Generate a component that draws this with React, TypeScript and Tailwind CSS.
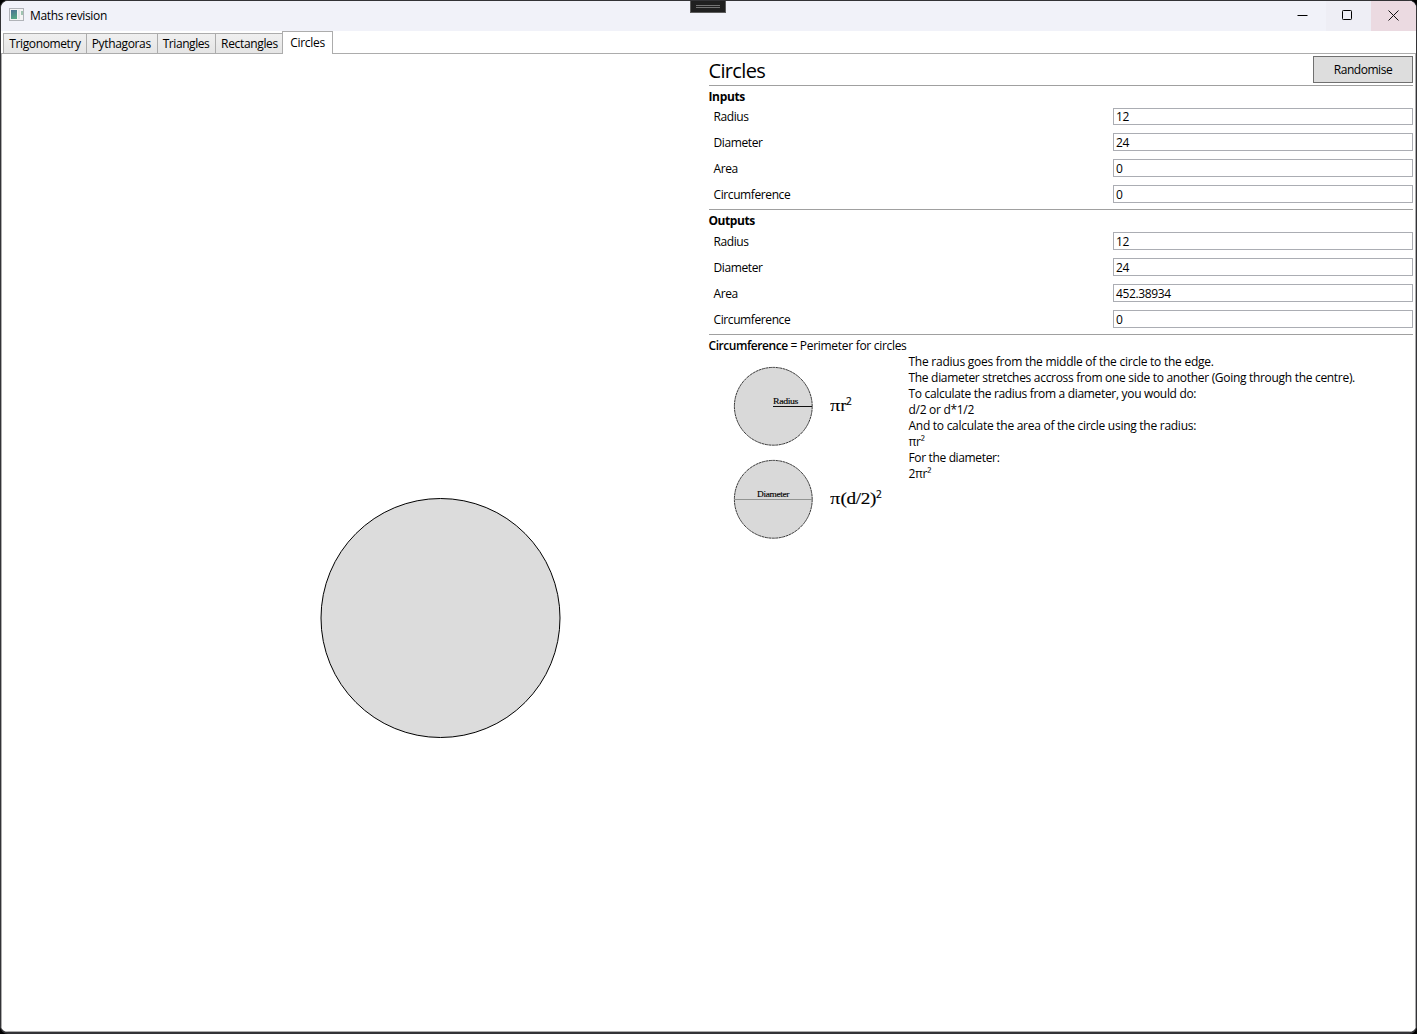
import React from "react";

const tabs = [
  { name: "Trigonometry", width: "w-[84px]", spacing: "tracking-[-0.38px]" },
  { name: "Pythagoras", width: "w-[72px]", spacing: "tracking-[-0.34px] pr-[1.5px]" },
  { name: "Triangles", width: "w-[59px]", spacing: "tracking-[-0.44px] pr-px" },
  { name: "Rectangles", width: "w-[68px]", spacing: "tracking-[-0.34px] pl-px" },
];

const inputs = [
  ["Radius", "12"],
  ["Diameter", "24"],
  ["Area", "0"],
  ["Circumference", "0"],
];

const outputs = [
  ["Radius", "12"],
  ["Diameter", "24"],
  ["Area", "452.38934"],
  ["Circumference", "0"],
];

function TitleBar() {
  return (
    <header className="relative flex h-[30px] shrink-0 bg-[#f1f2f9]">
      <svg className="ml-2 mt-[7px] h-[13px] w-[15px]" viewBox="0 0 15 13" shapeRendering="crispEdges">
        <defs>
          <linearGradient id="pane" x1="0" y1="0" x2="0.3" y2="1">
            <stop offset="0" stopColor="#4a6f94" />
            <stop offset="1" stopColor="#55a585" />
          </linearGradient>
        </defs>
        <rect x="0.5" y="0.5" width="14" height="12" fill="#f4f4f4" stroke="#b0b3b8" />
        <rect x="2" y="2" width="6" height="9" fill="url(#pane)" />
        <rect x="9" y="2" width="2" height="9" fill="#e2e5e8" />
        <rect x="12" y="3" width="2" height="4" fill="#9fc4b0" />
      </svg>
      <h1 className="ml-[6px] mt-[7px] text-[12px] leading-[16px] tracking-[-0.36px]">Maths revision</h1>
      <div className="absolute left-[689px] top-[-1px] flex h-[13px] w-9 flex-col items-center gap-px border border-[#5c5c5c] bg-[#202020] pt-1">
        <i className="h-px w-6 bg-[#737373]" />
        <i className="h-px w-6 bg-[#737373]" />
      </div>
      <div className="ml-auto flex">
        <button className="flex w-[46px] items-center justify-center pr-[2px]">
          <svg className="h-[11px] w-[11px]" viewBox="0 0 11 11"><path d="M0.5 4.5h10" stroke="#000" /></svg>
        </button>
        <button className="flex w-[45px] items-center justify-center bg-[#eeeef5]">
          <svg className="mb-px mr-[3px] h-[11px] w-[11px]" viewBox="0 0 11 11"><rect x="0.5" y="0.5" width="9" height="9" rx="0.8" fill="none" stroke="#000" /></svg>
        </button>
        <button className="flex w-[45px] items-center justify-center bg-[#ebdae1]">
          <svg className="mb-[2px] mr-[1px] h-[11px] w-[11px]" viewBox="0 0 11 11"><path d="M0.5 0.5l10 10M10.5 0.5l-10 10" stroke="#111" /></svg>
        </button>
      </div>
    </header>
  );
}

function Tabs() {
  return (
    <nav className="relative z-10 flex h-[23px] shrink-0 items-end pl-[2px] text-[12px] leading-[16px]">
      {tabs.map((t) => (
        <button key={t.name} className={`${t.width} ${t.spacing} -mr-px mb-px h-[20px] shrink-0 whitespace-nowrap border border-b-0 border-[#acacac] bg-linear-to-b from-[#f0f0f0] to-[#e5e5e5] pt-px`}>
          {t.name}
        </button>
      ))}
      <button className="h-[23px] w-[51px] border border-b-0 border-[#acacac] bg-white tracking-[-0.3px]">Circles</button>
    </nav>
  );
}

function Fields({ rows, first }: { rows: string[][]; first: string }) {
  return (
    <div className="flex flex-col gap-2">
      {rows.map(([label, value], i) => (
        <label key={label} className="flex h-[18px] justify-between pl-[4.5px]">
          <span className="leading-[20px] tracking-[-0.4px]">{label}</span>
          <span className={`w-[300px] border border-[#abadb3] pl-[2px] tracking-[-0.38px] ${i === 0 ? first : "leading-[17px]"}`}>{value}</span>
        </label>
      ))}
    </div>
  );
}

function Rule() {
  return <hr className="h-px border-0 bg-[#a0a0a0]" />;
}

function Diagram({ kind }: { kind: "Radius" | "Diameter" }) {
  const radius = kind === "Radius";
  return (
    <svg className="h-20 w-20 shrink-0" viewBox="0 0 80 80">
      <circle cx="40.3" cy="40.3" r="38.9" fill="#d9d9d9" stroke="#222" strokeWidth="0.9" strokeDasharray="3 0.5" />
      {radius ? (
        <path d="M40 40.5h39" stroke="#111" />
      ) : (
        <path d="M1 40.5h78" stroke="#929492" />
      )}
      <text
        x="40"
        y="38"
        textAnchor={radius ? "start" : "middle"}
        textLength={radius ? 25 : 32}
        lengthAdjust="spacingAndGlyphs"
        fontFamily="Liberation Serif, serif"
        fontSize="7.5"
        stroke="#000"
        strokeWidth="0.12"
      >
        {kind}
      </text>
    </svg>
  );
}

function Formula({ rest, width }: { rest: string; width: number }) {
  return (
    <svg className="ml-[17px] h-20 w-14 shrink-0" viewBox="0 0 56 80" fontFamily="Liberation Serif, serif" fontSize="16">
      <text x="0" y="45" textLength="10" lengthAdjust="spacingAndGlyphs">π</text>
      <text x="10.5" y="45" textLength={width} lengthAdjust="spacingAndGlyphs" stroke="#000" strokeWidth="0.15">{rest}</text>
      <text x={width + 10.5} y="39" fontFamily="Open Sans, sans-serif" fontSize="10" stroke="#000" strokeWidth="0.2">2</text>
    </svg>
  );
}

export default function App() {
  return (
    <div className="h-[1034px] w-[1417px] bg-black">
      <main
        className="flex h-full flex-col overflow-hidden rounded-lg border border-[#333336] border-b-2 bg-white text-[12px] text-black"
        style={{ fontFamily: '"Open Sans", "Noto Sans", sans-serif' }}
      >
        <TitleBar />
        <Tabs />
        <div className="-mt-px flex min-h-0 flex-1 border border-[#acacac]">
          <section className="w-[707px] shrink-0 pl-[318px] pt-[444px]">
            <svg className="h-[241px] w-[241px]" viewBox="0 0 241 241">
              <circle cx="120.5" cy="120" r="119.5" fill="#dcdcdc" stroke="#000" />
            </svg>
          </section>
          <section className="w-[704px] shrink-0 tracking-[-0.29px]">
            <div className="flex h-[31px] justify-between pt-[2px]">
              <h2 className="-ml-[0.5px] text-[20px] leading-[30px] tracking-[-0.65px]">Circles</h2>
              <button className="h-[27px] w-[100px] border border-[#707070] bg-[#dddddd] pt-px tracking-[-0.45px]">Randomise</button>
            </div>
            <Rule />
            <h3 className="-ml-[0.5px] h-[22px] font-bold leading-[22px] tracking-[-0.35px]">Inputs</h3>
            <div className="-mt-px">
              <Fields rows={inputs} first="mt-px leading-[15px]" />
            </div>
            <div className="h-[6px]" />
            <Rule />
            <h3 className="-ml-[0.5px] h-[22px] font-bold leading-[22px] tracking-[-0.45px]">Outputs</h3>
            <Fields rows={outputs} first="leading-[17px]" />
            <div className="h-[6px]" />
            <Rule />
            <p className="-ml-[0.5px] h-[19px] leading-[22px] tracking-[-0.3px]">
              <b className="font-semibold tracking-[-0.45px]">Circumference</b> = Perimeter for circles
            </p>
            <div className="flex">
              <div className="flex w-[199px] shrink-0 flex-col gap-[13px] pl-[24px] pt-[12px]">
                <div className="flex">
                  <Diagram kind="Radius" />
                  <Formula rest="r" width={5.5} />
                </div>
                <div className="flex">
                  <Diagram kind="Diameter" />
                  <Formula rest="(d/2)" width={35.5} />
                </div>
              </div>
              <div className="whitespace-nowrap pl-[0.5px] leading-[16px]">
                <p className="tracking-[-0.25px]">The radius goes from the middle of the circle to the edge.</p>
                <p className="tracking-[-0.305px]">The diameter stretches accross from one side to another (Going through the centre).</p>
                <p className="tracking-[-0.32px]">To calculate the radius from a diameter, you would do:</p>
                <p>d/2 or d*1/2</p>
                <p className="tracking-[-0.27px]">And to calculate the area of the circle using the radius:</p>
                <p>πr²</p>
                <p className="tracking-[-0.35px]">For the diameter:</p>
                <p>2πr²</p>
              </div>
            </div>
          </section>
        </div>
      </main>
    </div>
  );
}
